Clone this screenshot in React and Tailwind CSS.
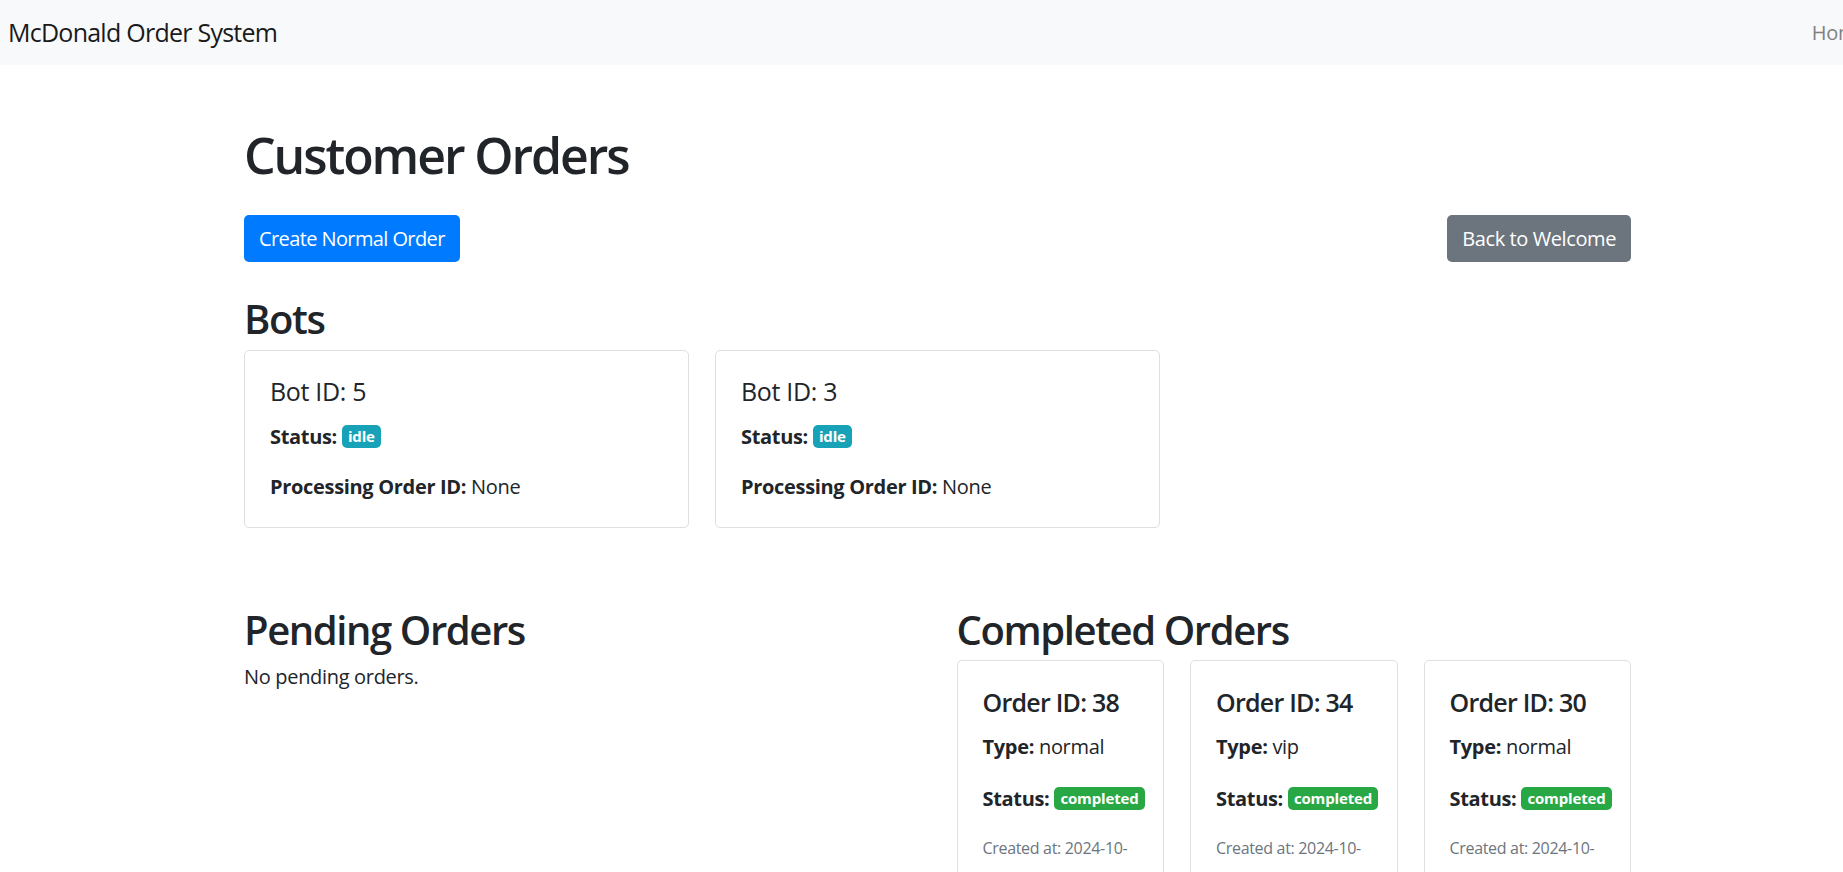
import React from "react";

const font = { fontFamily: '"Open Sans", "Noto Sans", sans-serif' };

function Badge({ color, children }) {
  return (
    <span
      className={`inline-block align-[2px] text-[15px] font-bold leading-none text-white rounded-[5px] px-[6px] py-[4px] tracking-[-0.01em] ${color}`}
    >
      {children}
    </span>
  );
}

function BotCard({ id }) {
  return (
    <div className="border border-[#dfdfdf] rounded-[5px] bg-white p-[25px]">
      <h5 className="text-[25px] leading-[30px] font-normal mb-[16px]">Bot ID: {id}</h5>
      <p className="text-[20px] leading-[30px] mb-[20px]">
        <strong className="font-bold">Status:</strong>{" "}
        <Badge color="bg-[#17a2b8]">idle</Badge>
      </p>
      <p className="text-[20px] leading-[30px]">
        <strong className="font-bold">Processing Order ID:</strong> None
      </p>
    </div>
  );
}

function OrderCard({ id, type }) {
  return (
    <div className="border border-[#dfdfdf] rounded-[5px] bg-white p-[25px] pt-[26px]">
      <h5 className="text-[25px] leading-[30px] font-semibold tracking-[-0.03em] mb-[15px]">Order ID: {id}</h5>
      <p className="text-[20px] leading-[30px] mb-[22px]">
        <strong className="font-bold">Type:</strong> {type}
      </p>
      <p className="text-[20px] leading-[30px] mb-[19px] whitespace-nowrap">
        <strong className="font-bold">Status:</strong>{" "}
        <Badge color="bg-[#28a745]">completed</Badge>
      </p>
      <p className="text-[16px] leading-[30px] text-[#6c757d]">
        Created at: 2024-10-21T08:15:32.000Z
      </p>
    </div>
  );
}

export default function App() {
  return (
    <div className="min-h-screen bg-white text-[#212529] tracking-[-0.02em]" style={font}>
      <nav className="h-[65px] bg-[#f8f9fa] flex items-center overflow-hidden pl-[8px]">
        <span className="text-[25px] text-[#1a1a1a] leading-none tracking-[-0.03em]">McDonald Order System</span>
        <span className="ml-auto mr-[-24px] text-[20px] text-[#808080] leading-none">Home</span>
      </nav>

      <main className="ml-[244px] w-[1387px] pt-[60px]">
        <h1 className="text-[50px] leading-[60px] font-semibold tracking-[-0.042em] mb-[30px]">Customer Orders</h1>

        <div className="flex justify-between mb-[33px]">
          <button className="h-[47px] px-[15px] rounded-[5px] bg-[#007bff] text-white text-[20px] tracking-[-0.03em]">
            Create Normal Order
          </button>
          <button className="h-[47px] px-[15px] rounded-[5px] bg-[#6c757d] text-white text-[20px] tracking-[-0.02em]">
            Back to Welcome
          </button>
        </div>

        <h2 className="text-[40px] leading-[48px] font-semibold tracking-[-0.035em] mb-[7px]">Bots</h2>
        <div className="grid grid-cols-3 gap-[26px]">
          <BotCard id={5} />
          <BotCard id={3} />
        </div>

        <div className="grid grid-cols-2 gap-[38px] mt-[78px]">
          <section>
            <h2 className="text-[40px] leading-[48px] font-semibold tracking-[-0.035em] mb-[8px]">Pending Orders</h2>
            <p className="text-[20px] leading-[30px]">No pending orders.</p>
          </section>
          <section>
            <h2 className="text-[40px] leading-[48px] font-semibold tracking-[-0.035em] mb-[6px]">Completed Orders</h2>
            <div className="grid grid-cols-3 gap-[26px]">
              <OrderCard id={38} type="normal" />
              <OrderCard id={34} type="vip" />
              <OrderCard id={30} type="normal" />
            </div>
          </section>
        </div>
      </main>
    </div>
  );
}
